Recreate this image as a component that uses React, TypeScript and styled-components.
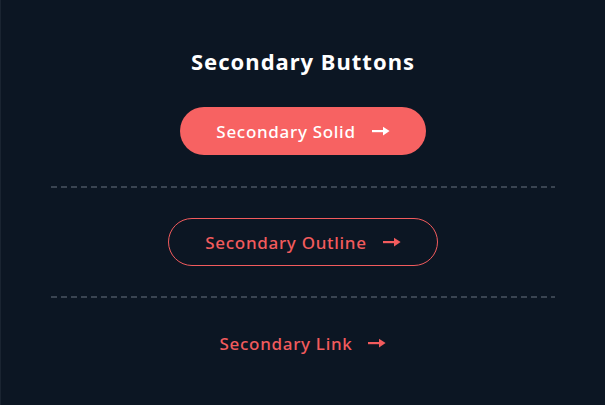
import styled, { createGlobalStyle } from "styled-components";

const GlobalStyle = createGlobalStyle`
    html, body {
        margin: 0;
        padding: 0;
        background: #0c1623;
    }
    body {
        font-family: "Noto Sans", "Open Sans", sans-serif;
        -webkit-font-smoothing: antialiased;
    }
`;

const Page = styled.div`
    width: 605px;
    height: 405px;
    box-sizing: border-box;
    border-left: 1px solid #1a2431;
    display: flex;
    justify-content: center;
`;

const Column = styled.div`
    width: 504px;
    display: flex;
    flex-direction: column;
    align-items: center;
`;

const Section = styled.section<{ $top: number; $bottom: number }>`
    display: flex;
    flex-direction: column;
    align-items: center;
    padding: ${(p) => p.$top}px 0 ${(p) => p.$bottom}px;
    align-self: stretch;
`;

const Title = styled.h2`
    margin: 0 0 33px;
    font-size: 22px;
    line-height: 26px;
    font-weight: 700;
    letter-spacing: 1px;
    color: #ffffff;
`;

const Divider = styled.div`
    align-self: stretch;
    height: 2px;
    background: repeating-linear-gradient(
        to right,
        #3a4451 0 6px,
        transparent 6px 10px
    );
`;

type Variant = "solid" | "outline" | "link";

const Button = styled.a<{ $variant: Variant }>`
    display: inline-flex;
    align-items: center;
    gap: 16px;
    box-sizing: border-box;
    height: ${(p) => (p.$variant === "link" ? "30px" : "48px")};
    padding: ${(p) => (p.$variant === "link" ? "0" : "0 36px")};
    border-radius: 24px;
    font-size: 17px;
    font-weight: 500;
    letter-spacing: 0.7px;
    text-decoration: none;
    cursor: pointer;
    color: ${(p) => (p.$variant === "solid" ? "#ffffff" : "#f25b5d")};
    background: ${(p) => (p.$variant === "solid" ? "#f76262" : "transparent")};
    border: ${(p) => (p.$variant === "outline" ? "1px solid #f25b5d" : "none")};
`;

function Arrow() {
    return (
        <svg width="18" height="10" viewBox="0 0 18 10" fill="currentColor">
            <rect x="0" y="4" width="13" height="2.2" />
            <path d="M11 0.8L17.6 5.1L11 9.4Z" />
        </svg>
    );
}

function App() {
    return (
        <>
            <GlobalStyle />
            <Page>
                <Column>
                    <Section $top={48} $bottom={31}>
                        <Title>Secondary Buttons</Title>
                        <Button $variant="solid">
                            Secondary Solid <Arrow />
                        </Button>
                    </Section>
                    <Divider />
                    <Section $top={30} $bottom={30}>
                        <Button $variant="outline">
                            Secondary Outline <Arrow />
                        </Button>
                    </Section>
                    <Divider />
                    <Section $top={30} $bottom={30}>
                        <Button $variant="link">
                            Secondary Link <Arrow />
                        </Button>
                    </Section>
                </Column>
            </Page>
        </>
    );
}

export default App;
